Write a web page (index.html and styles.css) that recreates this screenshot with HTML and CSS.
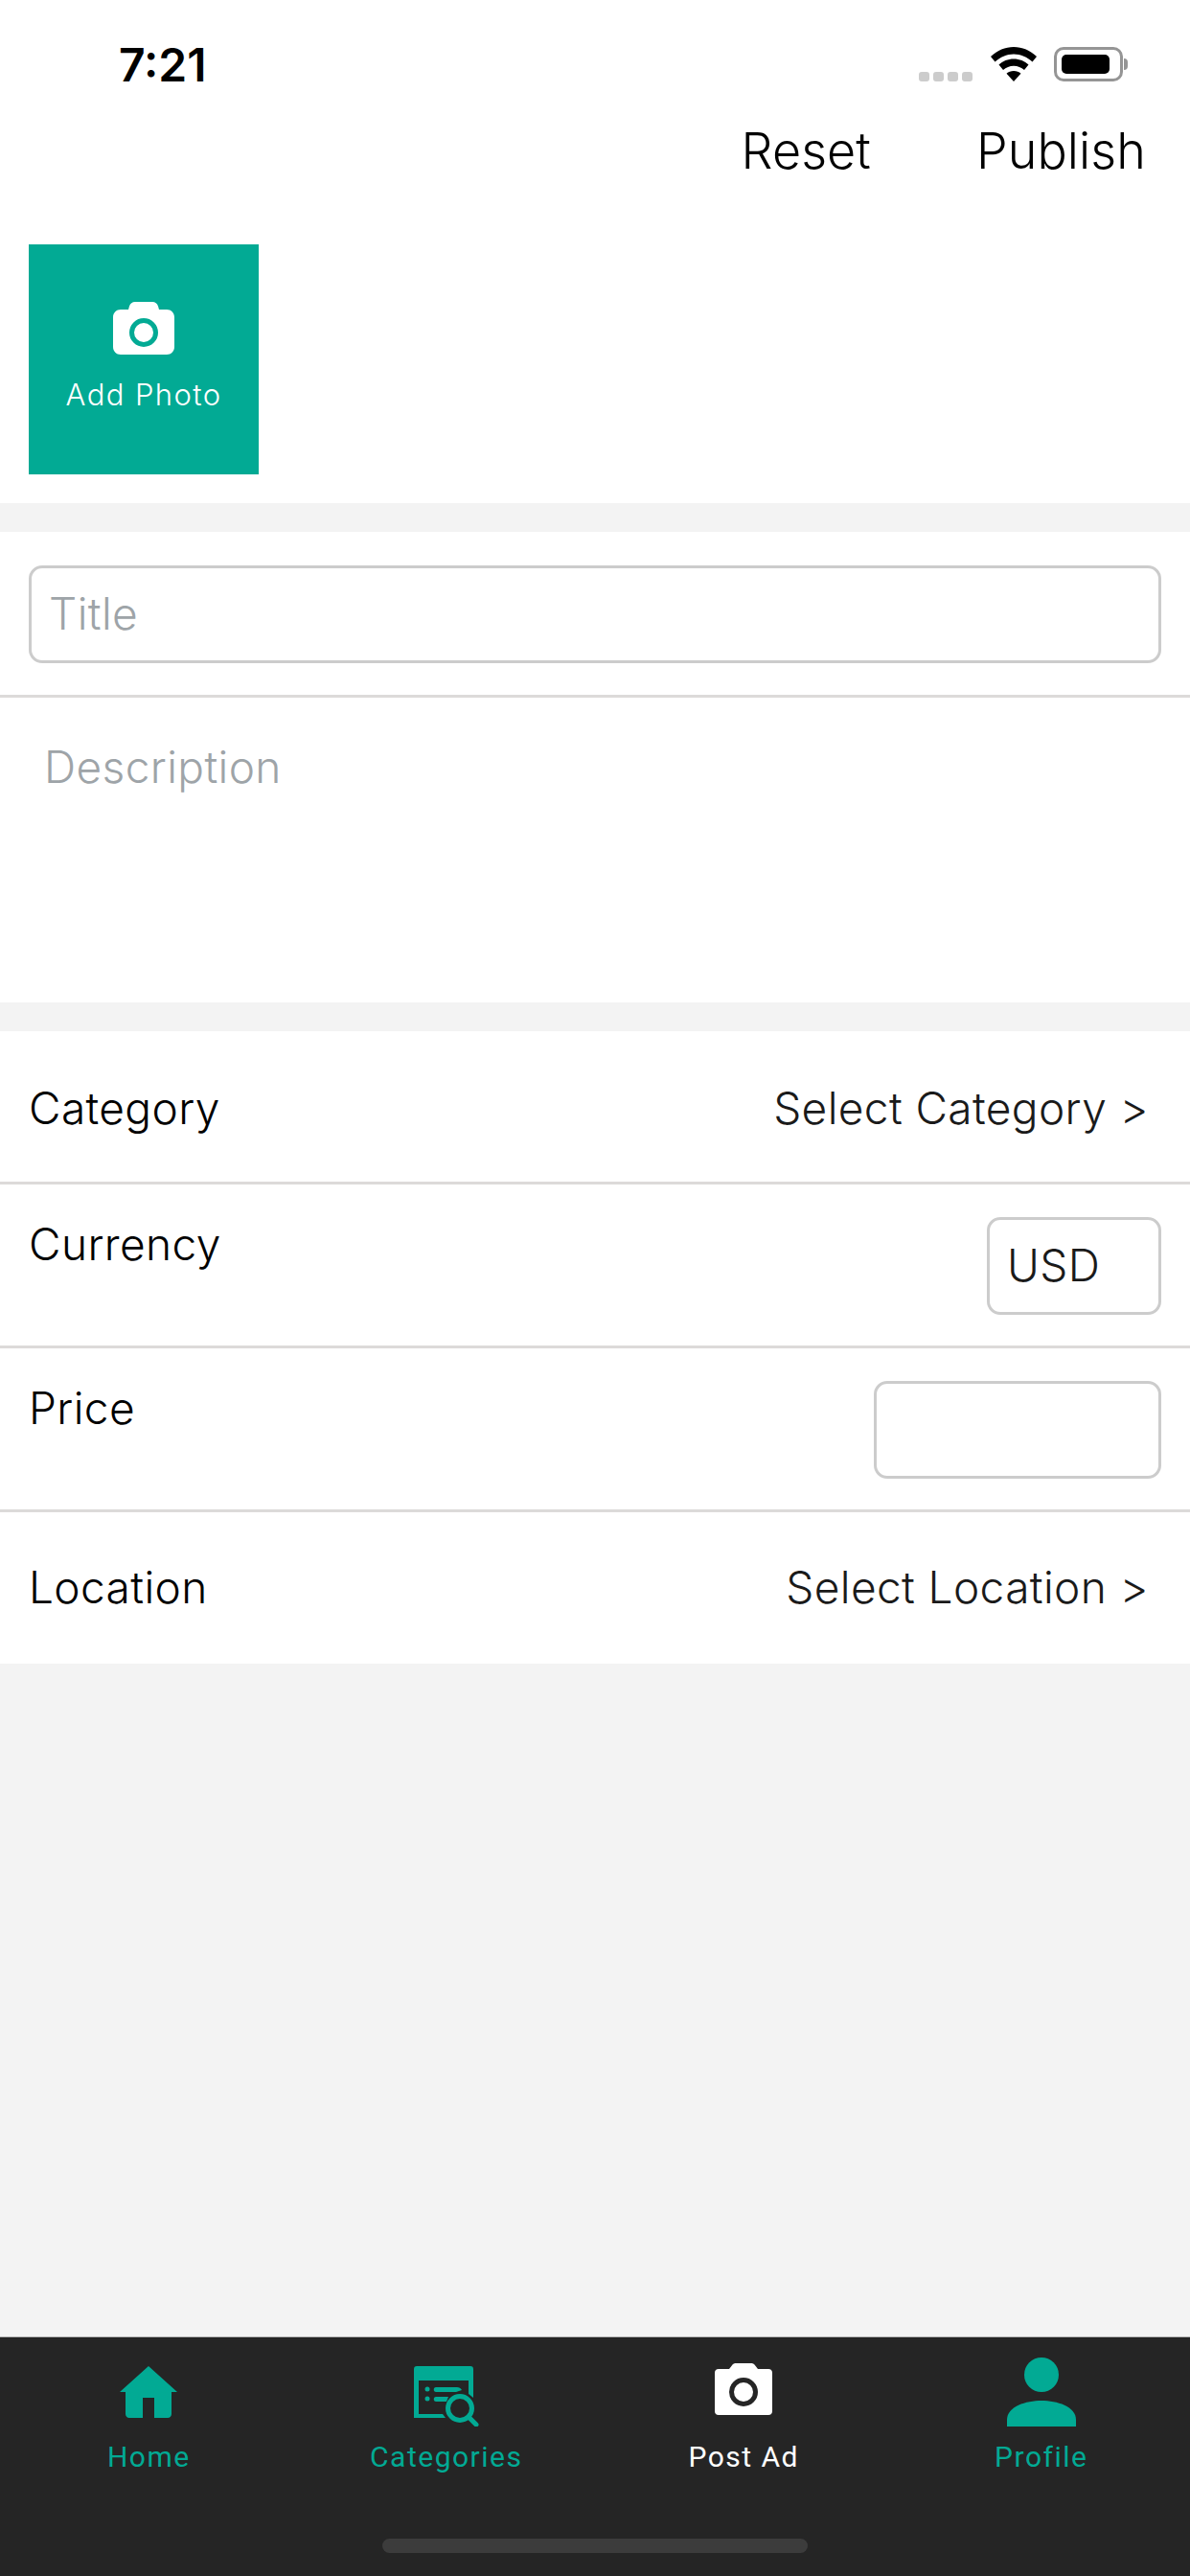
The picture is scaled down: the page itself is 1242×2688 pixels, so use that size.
FILE: index.html
```html
<!DOCTYPE html>
<html lang="en">
<head>
    <meta charset="UTF-8">
    <meta name="viewport" content="width=device-width, initial-scale=1.0">
    <title>Post Ad</title>
    <link rel="stylesheet" href="styles.css">
</head>
<body>

    <!-- Status bar -->
    <div class="status-bar">
        <div class="status-time">7:21</div>
        <div class="status-icons">
            <div class="signal-dots"><span></span><span></span><span></span><span></span></div>
            <svg class="wifi-icon" viewBox="0 0 48 36">
                <path d="M24 0C15 0 7 3.500 0 10l4.500 5.500C10 10.500 16.500 7.500 24 7.500s14 3 19.500 8L48 10C41 3.500 33 0 24 0z"/>
                <path d="M24 12.500c-6 0-11.500 2.300-15.500 6l4.500 5.500c3-2.700 6.800-4.300 11-4.300s8 1.600 11 4.300l4.500-5.500c-4-3.700-9.500-6-15.500-6z"/>
                <path d="M24 25c-3 0-5.500 1-7.500 2.800L24 36l7.500-8.200C29.500 26 27 25 24 25z"/>
            </svg>
            <div class="battery"><div class="battery-level"></div></div>
            <div class="battery-tip"></div>
        </div>
    </div>

    <!-- Header -->
    <div class="header">
        <div class="header-btn">Reset</div>
        <div class="header-btn">Publish</div>
    </div>

    <!-- Photo panel -->
    <div class="photo-panel">
        <div class="add-photo">
            <svg class="add-photo-icon" viewBox="0 0 64 55">
                <path class="camera-body" fill-rule="evenodd" d="M8 8h8l1-3.500C18 1.500 20 0 23 0h18c3 0 5 1.500 6 4.500L48 8h8c4.500 0 8 3.500 8 8v31c0 4.500-3.500 8-8 8H8c-4.500 0-8-3.500-8-8V16c0-4.500 3.500-8 8-8zM32 17a15 15 0 1 0 0 30 15 15 0 0 0 0-30zM32 22a10 10 0 1 1 0 20 10 10 0 0 1 0-20z"/>
            </svg>
            <div class="add-photo-label">Add Photo</div>
        </div>
    </div>

    <!-- Title and description -->
    <div class="form-panel">
        <div class="title-row">
            <div class="input-box placeholder">Title</div>
        </div>
        <div class="description placeholder">Description</div>
    </div>

    <!-- Details -->
    <div class="form-panel details-panel">
        <div class="detail-row link-row category-row">
            <div class="row-label">Category</div>
            <div>Select Category &gt;</div>
        </div>
        <div class="detail-row">
            <div class="row-label">Currency</div>
            <div class="input-box currency-box">USD</div>
        </div>
        <div class="detail-row">
            <div class="row-label">Price</div>
            <div class="input-box price-box"></div>
        </div>
        <div class="detail-row link-row last-row">
            <div class="row-label">Location</div>
            <div>Select Location &gt;</div>
        </div>
    </div>

    <div class="spacer"></div>

    <!-- Tab bar -->
    <div class="tab-bar">
        <div class="tabs">
            <div class="tab">
                <div class="tab-icon">
                    <svg class="icon-home" width="60" height="54" viewBox="0 0 60 54">
                        <path d="M30 0L60 27H54V50c0 2-1.500 4-4 4H36V33H24V54H10c-2.500 0-4-2-4-4V27H0z"/>
                    </svg>
                </div>
                <div class="tab-label">Home</div>
            </div>
            <div class="tab">
                <div class="tab-icon">
                    <svg class="icon-categories" width="68" height="63" viewBox="0 0 68 63">
                        <path d="M3 0h56c2 0 3 1 3 3v30l-5-4V15H5v35h25l3 4H0V3c0-2 1-3 3-3z"/>
                        <circle cx="14" cy="24" r="2.500"/>
                        <circle cx="14" cy="34" r="2.500"/>
                        <path d="M23 22h22c2 0 4 1 5 3l-6 2H23c-3 0-3-5 0-5zM23 32h13l-2 5H23c-3 0-3-5 0-5z"/>
                        <circle class="tab-stroke" cx="48" cy="44" r="12.500"/>
                        <path class="tab-stroke" d="M57 53l8 8"/>
                    </svg>
                </div>
                <div class="tab-label">Categories</div>
            </div>
            <div class="tab tab-active">
                <div class="tab-icon">
                    <svg class="icon-camera" width="60" height="54" viewBox="0 0 60 54">
                        <path class="camera-body" fill-rule="evenodd" d="M4 6h11l3.500-4.500C19.500.5 20.500 0 22 0h16c1.500 0 2.500.5 3.500 1.500L45 6h11c2.500 0 4 1.500 4 4v40c0 2.500-1.500 4-4 4H4c-2.500 0-4-1.500-4-4V10c0-2.500 1.500-4 4-4zM30 15a15 15 0 1 0 0 30 15 15 0 0 0 0-30zM30 20a10 10 0 1 1 0 20 10 10 0 0 1 0-20z"/>
                    </svg>
                </div>
                <div class="tab-label">Post Ad</div>
            </div>
            <div class="tab">
                <div class="tab-icon">
                    <svg class="icon-profile" width="72" height="72" viewBox="0 0 72 72">
                        <circle cx="36" cy="18" r="18"/>
                        <path d="M36 45c-16 0-36 6-36 20v7h72v-7c0-14-20-20-36-20z"/>
                    </svg>
                </div>
                <div class="tab-label">Profile</div>
            </div>
        </div>
        <div class="home-indicator"></div>
    </div>

</body>
</html>
```

FILE: styles.css
```css
/* Basic styling */
* {
    box-sizing: border-box;
}

body {
    font-family: Inter, "Noto Sans", sans-serif;
    font-weight: 350;
    letter-spacing: 0.4px;
    margin: 0;
    width: 1242px;
    height: 2688px;
    display: flex;
    flex-direction: column;
    background-color: #f3f3f3;
    color: #1a1a1a;
    font-size: 46px;
    overflow: hidden;
}

/* Status bar */
.status-bar {
    height: 120px;
    padding: 42px 65px 0 124px;
    background-color: white;
    display: flex;
    justify-content: space-between;
    align-items: flex-start;
}

.status-time {
    font-weight: 600;
    font-size: 48px;
    line-height: 52px;
    letter-spacing: 0;
    color: black;
}

.status-icons {
    display: flex;
    align-items: center;
    height: 36px;
    margin-top: 7px;
}

.signal-dots {
    display: flex;
    gap: 4px;
    margin: 26px 19px 0 0;
}

.signal-dots span {
    width: 11px;
    height: 10px;
    border-radius: 3px;
    background-color: #cccccc;
}

.wifi-icon {
    width: 48px;
    height: 36px;
    margin-right: 18px;
}

.battery {
    width: 72px;
    height: 36px;
    padding: 5px;
    border: 3px solid #959595;
    border-radius: 10px;
}

.battery-level {
    width: 50px;
    height: 100%;
    background-color: black;
    border-radius: 5px;
}

.battery-tip {
    width: 4px;
    height: 12px;
    margin-left: 1px;
    background-color: #959595;
    border-radius: 0 4px 4px 0;
}

/* Header */
.header {
    height: 135px;
    padding: 2px 46px 0 0;
    background-color: white;
    display: flex;
    justify-content: flex-end;
    align-items: flex-start;
    gap: 110px;
}

.header-btn {
    font-size: 52px;
    line-height: 72px;
    letter-spacing: 0.1px;
    color: black;
}

/* Photo panel */
.photo-panel {
    height: 270px;
    padding-left: 30px;
    background-color: white;
}

.add-photo {
    width: 240px;
    height: 240px;
    padding-top: 60px;
    background-color: #02aa94;
    color: white;
    display: flex;
    flex-direction: column;
    align-items: center;
}

.add-photo-icon {
    width: 64px;
    height: 55px;
}

.camera-body {
    fill: white;
}

.add-photo-label {
    margin-top: 20px;
    font-size: 31px;
    font-weight: 300;
    line-height: 44px;
    letter-spacing: 1.4px;
}

/* Form panels */
.form-panel {
    margin-top: 30px;
    background-color: white;
}

.title-row {
    padding: 35px 30px 33px;
    border-bottom: 3px solid #dcdad9;
}

.input-box {
    height: 102px;
    padding: 0 18px 2px;
    border: 3px solid #cccccc;
    border-radius: 14px;
    display: flex;
    align-items: center;
}

.placeholder {
    color: #9ea4a8;
}

.description {
    height: 318px;
    padding: 44px 46px;
    line-height: 56px;
}

/* Detail rows */
.detail-row {
    height: 171px;
    padding: 34px 30px 0;
    border-bottom: 3px solid #dcdad9;
    display: flex;
    justify-content: space-between;
    align-items: flex-start;
    line-height: 56px;
}

.row-label {
    color: black;
}

.link-row {
    height: 160px;
    padding: 0 43px 0 30px;
    align-items: center;
}

.category-row {
    padding-top: 2px;
}

.last-row {
    height: 158px;
    padding-bottom: 2px;
    border-bottom: none;
}

.currency-box {
    width: 182px;
}

.price-box {
    width: 300px;
}

.spacer {
    flex: 1;
}

/* Tab bar */
.tab-bar {
    height: 250px;
    background-color: #252525;
    border-top: 1px solid #b5b5b5;
}

.tabs {
    display: grid;
    grid-template-columns: repeat(4, 1fr);
    height: 210px;
}

.tab {
    display: flex;
    flex-direction: column;
    align-items: center;
    color: #02aa94;
    fill: #02aa94;
}

.tab-active {
    color: white;
    fill: white;
}

.tab-icon {
    height: 105px;
}

.icon-home,
.icon-categories {
    margin-top: 30px;
}

.icon-camera {
    margin-top: 27px;
}

.icon-profile {
    margin-top: 21px;
}

.tab-stroke {
    fill: none;
    stroke: #02aa94;
    stroke-width: 5;
    stroke-linecap: round;
}

.tab-label {
    font-family: Roboto, sans-serif;
    font-size: 30px;
    font-weight: 400;
    line-height: 40px;
    letter-spacing: 1.5px;
}

.home-indicator {
    width: 444px;
    height: 15px;
    margin: 0 auto;
    background-color: #3c3c3c;
    border-radius: 8px;
}
```
